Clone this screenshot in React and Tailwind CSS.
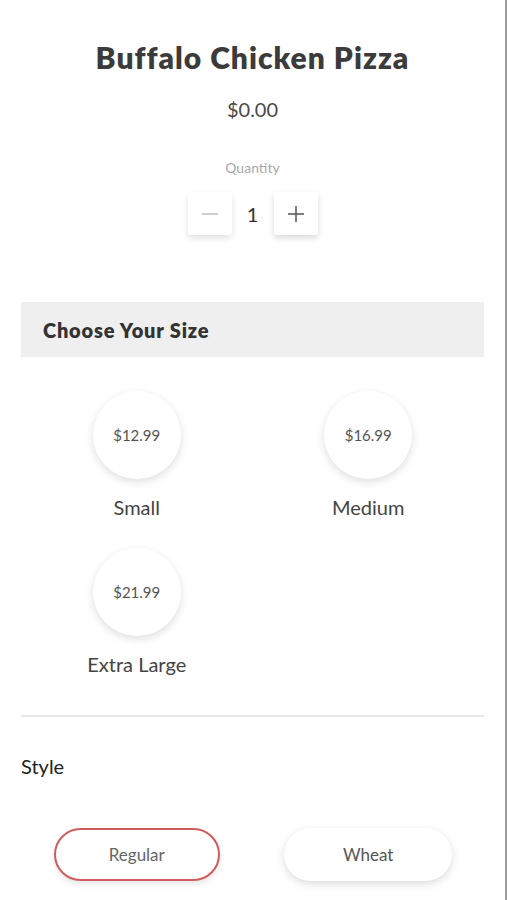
export default function App() {
    const sizes = [
        { name: 'Small', price: '$12.99' },
        { name: 'Medium', price: '$16.99' },
        { name: 'Extra Large', price: '$21.99' },
    ];

    return (
        <div className="min-h-[900px] w-[507px] bg-white border-r-2 border-[#9a9a9a]" style={{ fontFamily: 'Lato, "Noto Sans", sans-serif' }}>
            <div className="px-[21px]">
                {/* Header */}
                <div className="flex flex-col items-center pt-[38px]">
                    <h1 className="text-[30px] leading-[38px] font-extrabold text-[#3b3b3b] tracking-[1px]">Buffalo Chicken Pizza</h1>
                    <div className="mt-[21px] text-[20px] leading-[24px] text-[#4a4a4a]">$0.00</div>
                    <div className="mt-[38px] text-[14px] leading-[18px] text-[#a8a8a8]">Quantity</div>
                    <div className="mt-[15px] flex items-center gap-[14px]">
                        <button className="w-[44px] h-[43px] flex items-center justify-center bg-white rounded-[3px] shadow-[0_3px_6px_rgba(0,0,0,0.12)]">
                            <svg width="18" height="18" viewBox="0 0 18 18"><path d="M1 9h16" stroke="#bdbdbd" strokeWidth="1.5" /></svg>
                        </button>
                        <span className="w-[14px] text-center text-[20px] text-[#333]">1</span>
                        <button className="w-[44px] h-[43px] flex items-center justify-center bg-white rounded-[3px] shadow-[0_3px_6px_rgba(0,0,0,0.15)]">
                            <svg width="18" height="18" viewBox="0 0 18 18"><path d="M1 9h16M9 1v16" stroke="#555" strokeWidth="1.5" /></svg>
                        </button>
                    </div>
                </div>

                {/* Size */}
                <div className="mt-[67px] h-[55px] bg-[#efefef] flex items-center px-[22px]">
                    <h2 className="text-[20px] font-extrabold text-[#333] tracking-[0.8px]">Choose Your Size</h2>
                </div>

                <div className="grid grid-cols-2 gap-y-[29px] pt-[34px]">
                    {sizes.map((s) => (
                        <div key={s.name} className="flex flex-col items-center">
                            <div className="w-[88px] h-[88px] rounded-full bg-white flex items-center justify-center shadow-[0_3px_8px_rgba(0,0,0,0.13)]">
                                <span className="text-[15px] text-[#555]">{s.price}</span>
                            </div>
                            <span className="mt-[16px] text-[20px] leading-[24px] text-[#444]">{s.name}</span>
                        </div>
                    ))}
                </div>

                <div className="mt-[39px] border-t-2 border-[#e8e8e8]" />

                {/* Style */}
                <div className="mt-[37px] text-[20px] leading-[24px] text-[#222]">Style</div>

                <div className="grid grid-cols-2 pt-[50px]">
                    <div className="flex justify-center">
                        <button className="w-[166px] h-[53px] rounded-full border-2 border-[#cf5c5c] bg-white text-[17px] text-[#666] shadow-[0_3px_6px_rgba(0,0,0,0.1)]">Regular</button>
                    </div>
                    <div className="flex justify-center">
                        <button className="w-[168px] h-[53px] rounded-full bg-white text-[17px] text-[#555] shadow-[0_3px_8px_rgba(0,0,0,0.14)]">Wheat</button>
                    </div>
                </div>
            </div>
        </div>
    );
}
